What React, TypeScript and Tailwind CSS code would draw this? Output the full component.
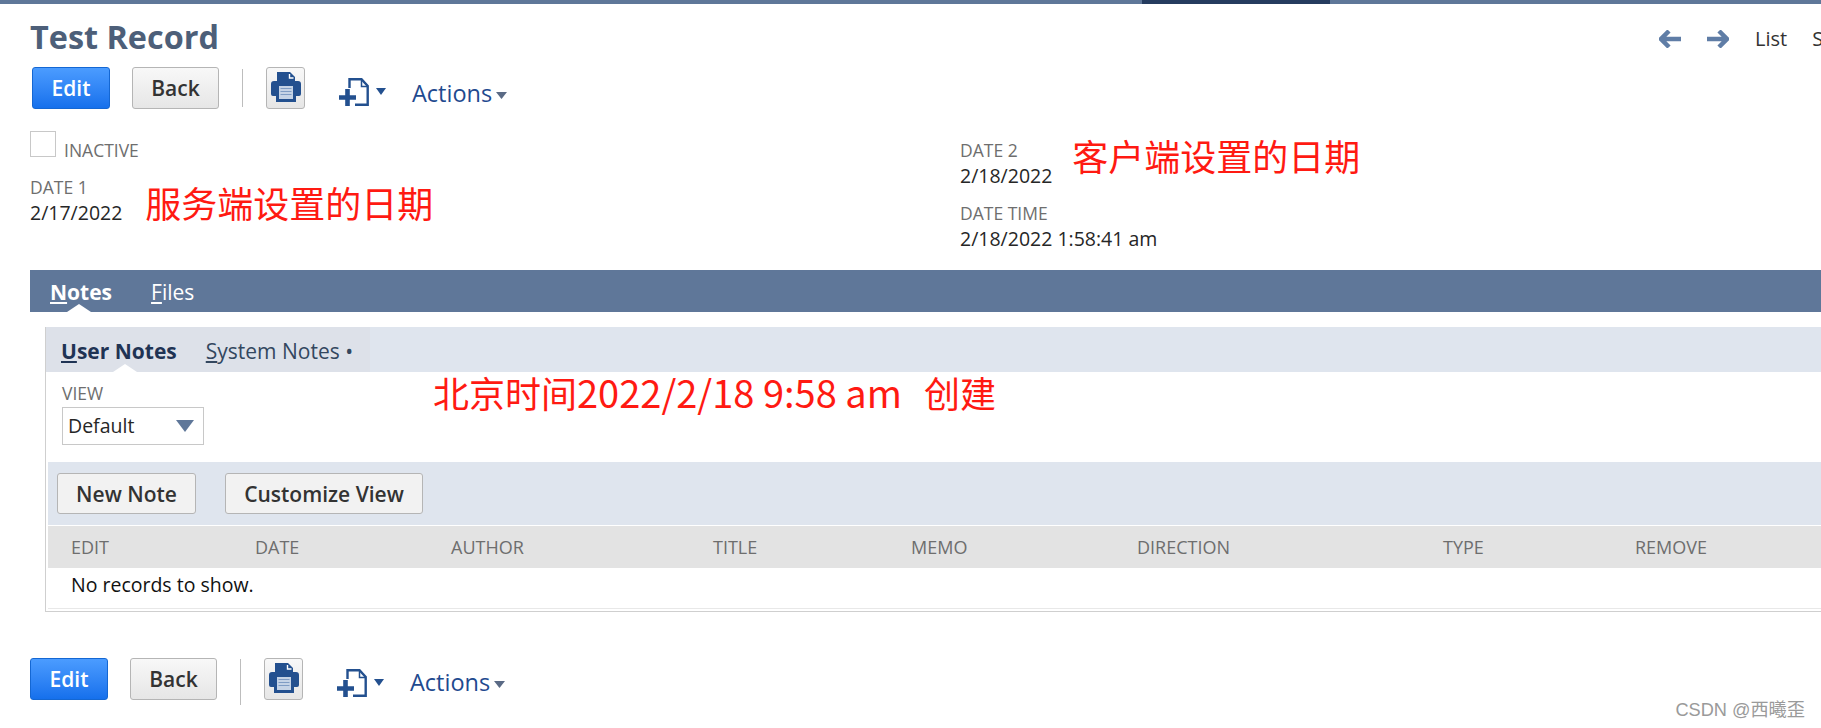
import React from "react";

const PrintIcon = () => (
  <svg width="30" height="30" viewBox="0 0 30 30">
    <path d="M6 0h13l5 5v8H6z" fill="#23508f" />
    <path d="M18.5 2v4h4" fill="none" stroke="#fff" strokeWidth="1.4" />
    <path d="M3 9h24a3 3 0 0 1 3 3v10a2 2 0 0 1-2 2h-3v6H5v-6H2a2 2 0 0 1-2-2V12a3 3 0 0 1 3-3z" fill="#23508f" />
    <path d="M8 14h14v13H8z" fill="#c5d3e6" />
    <path d="M9.5 16.5h11M9.5 19.5h11M9.5 22.5h11" stroke="#7f9cc4" strokeWidth="1" />
  </svg>
);

const NewIcon = () => (
  <svg width="30" height="28" viewBox="0 0 30 28">
    <path d="M10.5 10V1.2H22.5L28.7 8V26.7H16" fill="none" stroke="#23508f" strokeWidth="2.4" />
    <path d="M22.5 1.5V8.5H29" fill="none" stroke="#23508f" strokeWidth="1.5" />
    <path d="M0 19.5h17M8.5 11v17" fill="none" stroke="#23508f" strokeWidth="4.6" />
  </svg>
);

const Caret = ({ color, w = 11 }: { color: string; w?: number }) => (
  <svg width={w} height="7" viewBox="0 0 12 7" preserveAspectRatio="none">
    <path d="M0 0h12L6 7z" fill={color} />
  </svg>
);

const Toolbar = ({ bottom }: { bottom?: boolean }) => (
  <div className="flex items-start">
    <button className="w-[78px] h-[42px] rounded-[3px] border border-[#1467d3] bg-gradient-to-b from-[#4b9cff] to-[#1570ec] text-white font-semibold text-[21px] leading-[38px]">
      Edit
    </button>
    <button className="ml-[22px] w-[87px] h-[42px] rounded-[3px] border border-[#b5b5b5] bg-gradient-to-b from-[#f8f8f8] to-[#e6e6e6] text-[#333] font-semibold text-[21px] leading-[38px]">
      Back
    </button>
    <div className={`ml-[23px] w-px bg-[#bdbdbd] ${bottom ? "h-[46px] mt-px" : "h-[38px] mt-[2px]"}`} />
    <button className="ml-[23px] w-[39px] h-[42px] rounded-[3px] border border-[#b5b5b5] bg-gradient-to-b from-[#f8f8f8] to-[#e6e6e6] flex justify-center pt-[4px]">
      <PrintIcon />
    </button>
    <div className="ml-[34px] mt-[11px] flex items-start">
      <NewIcon />
      <div className="ml-[7px] mt-[10px]">
        <Caret color="#23508f" w={10} />
      </div>
    </div>
    <div className={`ml-[26px] ${bottom ? "mt-[8px]" : "mt-[10px]"} flex items-center text-[#1f4a8f] text-[23.5px] leading-[32px]`}>
      Actions
      <div className="ml-[4px] mt-[4px]">
        <Caret color="#5a6a85" />
      </div>
    </div>
  </div>
);

const Label = ({ children }: { children: React.ReactNode }) => (
  <div className="text-[17.5px] leading-[22px] text-[#6e6e6e] uppercase">{children}</div>
);
const Value = ({ children }: { children: React.ReactNode }) => (
  <div className="mt-[2px] text-[19.5px] leading-[26px] text-[#262626]">{children}</div>
);
const Note = ({ children, className }: { children: React.ReactNode; className?: string }) => (
  <div
    className={`text-[#ff1a12] text-[36px] leading-[44px] whitespace-pre ${className ?? ""}`}
    style={{ fontFamily: '"Noto Sans CJK SC", "Open Sans", sans-serif' }}
  >
    {children}
  </div>
);

const Notch = ({ left }: { left: string }) => (
  <div className={`absolute bottom-0 ${left} w-0 h-0 border-x-[12px] border-x-transparent border-b-[8px] border-b-white`} />
);

const columns: [string, string][] = [
  ["EDIT", "w-[184px]"],
  ["DATE", "w-[196px]"],
  ["AUTHOR", "w-[262px]"],
  ["TITLE", "w-[198px]"],
  ["MEMO", "w-[226px]"],
  ["DIRECTION", "w-[306px]"],
  ["TYPE", "w-[192px]"],
  ["REMOVE", "w-[100px]"],
];

export default function App() {
  return (
    <div
      className="relative w-[1821px] h-[728px] overflow-hidden bg-white flex flex-col"
      style={{ fontFamily: '"Open Sans", sans-serif' }}
    >
      <div className="flex h-1 shrink-0">
        <div className="w-[1142px] bg-[#5f7799]" />
        <div className="w-[188px] bg-[#253c5f]" />
        <div className="flex-1 bg-[#5f7799]" />
      </div>

      <div className="flex items-start justify-between h-[63px] pl-[30px]">
        <h1 className="mt-[11px] text-[#4d5f79] font-bold text-[32.4px] leading-[42px]">Test Record</h1>
        <div className="flex items-center mt-[19px] w-[162px] shrink-0 text-[20px] leading-[32px] text-[#333] whitespace-nowrap overflow-hidden">
          <svg width="22" height="18" viewBox="0 0 22 18" className="shrink-0">
            <path d="M10 1L2 9l8 8M3 9h19" fill="none" stroke="#5f7da6" strokeWidth="4.5" />
          </svg>
          <svg width="22" height="18" viewBox="0 0 22 18" className="ml-[26px] shrink-0">
            <path d="M12 1l8 8-8 8M19 9H0" fill="none" stroke="#5f7da6" strokeWidth="4.5" />
          </svg>
          <span className="ml-[26px]">List</span>
          <span className="ml-[25px]">Search</span>
        </div>
      </div>

      <div className="pl-[32px]">
        <Toolbar />
      </div>

      <div className="flex h-[161px] pl-[30px]">
        <div className="w-[930px] pt-[22px]">
          <div className="flex items-end">
            <div className="w-[26px] h-[26px] border border-[#c8c8c8]" />
            <div className="ml-[8px] mb-[-4px]">
              <Label>Inactive</Label>
            </div>
          </div>
          <div className="flex mt-[19px]">
            <div>
              <Label>Date 1</Label>
              <Value>2/17/2022</Value>
            </div>
            <Note className="ml-[23px] mt-[4px]">服务端设置的日期</Note>
          </div>
        </div>
        <div className="pt-[30px]">
          <div className="flex">
            <div>
              <Label>Date 2</Label>
              <Value>2/18/2022</Value>
            </div>
            <Note className="ml-[20px] mt-[-6px]">客户端设置的日期</Note>
          </div>
          <div className="mt-[13px]">
            <Label>Date Time</Label>
            <Value>2/18/2022 1:58:41 am</Value>
          </div>
        </div>
      </div>

      <div className="ml-[30px] h-[42px] shrink-0 bg-[#5f7799] flex items-center pl-[20px] text-white text-[21px] leading-[28px]">
        <div className="relative h-full flex items-center font-bold">
          <span className="mt-[2px]">
            <span className="underline underline-offset-2">N</span>otes
          </span>
          <Notch left="left-[17px]" />
        </div>
        <span className="ml-[39px] mt-[2px]">
          <span className="underline underline-offset-2">F</span>iles
        </span>
      </div>

      <div className="ml-[45px] mt-[15px] h-[285px] shrink-0 border-l border-b border-[#cfcfcf] flex flex-col">
        <div className="h-[45px] shrink-0 bg-[#dfe5ee] flex">
          <div className="w-[324px] bg-[#dde1e9] flex items-center pl-[15px] text-[21px] leading-[28px]">
            <div className="relative h-full flex items-center font-bold text-[#1f3354]">
              <span className="mt-[2px]">
                <span className="underline underline-offset-2">U</span>ser Notes
              </span>
              <Notch left="left-[52px]" />
            </div>
            <span className="ml-[29px] mt-[2px] text-[#33475f]">
              <span className="underline underline-offset-2">S</span>ystem Notes •
            </span>
          </div>
        </div>

        <div className="h-[90px] shrink-0 flex pl-[16px]">
          <div className="w-[371px] pt-[10px] shrink-0">
            <Label>View</Label>
            <div className="mt-[3px] w-[142px] h-[38px] border border-[#c8c8c8] flex items-center justify-between pl-[5px] pr-[9px] text-[19.5px] text-[#262626]">
              Default
              <svg width="18" height="12" viewBox="0 0 18 12">
                <path d="M0 0h18L9 12z" fill="#5f7799" />
              </svg>
            </div>
          </div>
          <Note className="mt-[-2px]">
            北京时间<span className="text-[38px]">2022/2/18 9:58 am</span>
            <span className="ml-[22px]">创建</span>
          </Note>
        </div>

        <div className="h-[63px] shrink-0 ml-[2px] bg-[#dfe5ee] flex items-start pl-[9px] pt-[11px]">
          <button className="w-[139px] h-[41px] pt-[2px] rounded-[3px] border border-[#b5b5b5] bg-[#f2f2f2] text-[#333] font-semibold text-[21px]">
            New Note
          </button>
          <button className="ml-[29px] w-[198px] h-[41px] pt-[2px] rounded-[3px] border border-[#b5b5b5] bg-[#f2f2f2] text-[#333] font-semibold text-[21px]">
            Customize View
          </button>
        </div>

        <div className="h-[42px] shrink-0 ml-[2px] mt-[1px] bg-[#e3e3e3] flex items-center pl-[23px] text-[18px] text-[#6e6e6e]">
          {columns.map(([name, w]) => (
            <div key={name} className={`${w} shrink-0`}>
              {name}
            </div>
          ))}
        </div>
        <div className="ml-[2px] pl-[23px] h-[41px] pb-[6px] shrink-0 flex items-center text-[19.5px] text-[#111] border-b border-[#e8e8e8]">
          No records to show.
        </div>
      </div>

      <div className="pl-[30px] mt-[46px]">
        <Toolbar bottom />
      </div>

      <div
        className="absolute right-[16px] top-[699px] text-[18.2px] leading-[22px] text-[#9a9a9a]"
        style={{ fontFamily: '"Liberation Sans", "Noto Sans CJK SC", sans-serif' }}
      >
        CSDN @西曦歪
      </div>
    </div>
  );
}
